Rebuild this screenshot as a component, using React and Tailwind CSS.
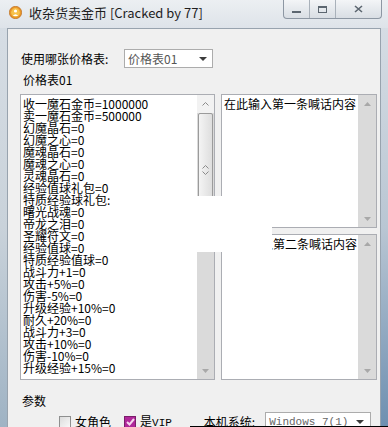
import React from 'react';

const cn = "font-['SimSun','Noto_Sans_CJK_SC',sans-serif]";

const lines = [
  '收一魔石金币=1000000',
  '卖一魔石金币=500000',
  '幻魔晶石=0',
  '幻魔之心=0',
  '魔魂晶石=0',
  '魔魂之心=0',
  '灵魂晶石=0',
  '经验值球礼包=0',
  '特质经验球礼包:',
  '曙光战魂=0',
  '帝龙之泪=0',
  '圣耀符文=0',
  '经验值球=0',
  '特质经验值球=0',
  '战斗力+1=0',
  '攻击+5%=0',
  '伤害-5%=0',
  '升级经验+10%=0',
  '耐久+20%=0',
  '战斗力+3=0',
  '攻击+10%=0',
  '伤害-10%=0',
  '升级经验+15%=0',
];

const Tri = ({ up }) => (
  <svg width="7" height="4" viewBox="0 0 7 4">
    <path d={up ? 'M0 4 L3.5 0 L7 4 Z' : 'M0 0 L3.5 4 L7 0 Z'} fill="#a8a8a8" />
  </svg>
);

const Chev = ({ up }) => (
  <svg width="7" height="4" viewBox="0 0 7 4">
    <path d={up ? 'M0.5 3.5 L3.5 0.5 L6.5 3.5' : 'M0.5 0.5 L3.5 3.5 L6.5 0.5'} fill="none" stroke="#8a8a8a" strokeWidth="1" />
  </svg>
);

// disabled win7 scrollbar (no thumb)
const EmptyScroll = () => (
  <div className="w-[18px] h-full bg-[#dadada] flex flex-col justify-between">
    <div className="h-[17px] flex items-center justify-center"><Tri up /></div>
    <div className="h-[17px] flex items-center justify-center"><Tri /></div>
  </div>
);

const ComboArrow = () => (
  <svg width="8" height="4" viewBox="0 0 8 4">
    <path d="M0 0 L8 0 L4 4 Z" fill="#3c3c3c" />
  </svg>
);

const App = () => {
  return (
    <div className={`relative w-[388px] h-[427px] overflow-hidden bg-[#d3dae2] ${cn}`}>
      {/* Title bar */}
      <div className="h-[28px] flex items-start bg-gradient-to-b from-[#eceff2] to-[#dee3e9]">
        <div className="mt-[6px] ml-[9px]">
          <svg width="13" height="13" viewBox="0 0 13 13">
            <circle cx="6.5" cy="6.5" r="6.2" fill="#e8962a" stroke="#b5651a" strokeWidth="0.6" />
            <circle cx="6.5" cy="6.5" r="4.4" fill="#f7c14a" />
            <circle cx="6.5" cy="5" r="1.6" fill="#fff" />
            <path d="M3.8 10 Q6.5 6.5 9.2 10 Z" fill="#fff" />
          </svg>
        </div>
        <div className="ml-[7px] mt-[5px] text-[13px] leading-[16px] text-[#1e1e1e] font-['Noto_Sans_CJK_SC',sans-serif]">
          收杂货卖金币 [Cracked by 77]
        </div>
        <div className="ml-auto mr-[6px] flex h-[19px] border border-t-0 border-[#8d97a3] rounded-b-[4px] bg-gradient-to-b from-[#f3f5f7] to-[#d9dee4] overflow-hidden">
          <div className="w-[26px] flex items-center justify-center border-r border-[#a9b1ba]">
            <div className="w-[9px] h-[2px] bg-[#5c6670] mt-[5px]" />
          </div>
          <div className="w-[26px] flex items-center justify-center border-r border-[#a9b1ba]">
            <div className="w-[9px] h-[7px] border border-[#5c6670] border-t-2" />
          </div>
          <div className="w-[45px] flex items-center justify-center">
            <svg width="9" height="8" viewBox="0 0 9 8">
              <path d="M1 1 L8 7 M8 1 L1 7" stroke="#5c6670" strokeWidth="1.6" />
            </svg>
          </div>
        </div>
      </div>

      <div className="flex h-[399px]">
        <div className="w-[7px] bg-gradient-to-b from-[#d6dde4] via-[#c9d2da] to-[#9fb3c4]" />
        {/* Client */}
        <div className="w-[374px] bg-[#f0f0f0] border-t border-l border-r border-[#98a3ae] pl-[12px] pt-[20px] text-[12px] leading-[12px] text-black">
          <div className="flex items-center h-[19px]">
            <div className="w-[104px] pl-[1px] text-[12px]">使用哪张价格表:</div>
            <div className="w-[89px] h-[19px] bg-white border border-[#acacac] flex items-center pl-[3px] pr-[5px]">
              <span className="text-[#555]">价格表01</span>
              <span className="ml-auto"><ComboArrow /></span>
            </div>
          </div>
          <div className="mt-[6px] ml-[3px] h-[12px]">价格表01</div>

          <div className="mt-[8px] flex gap-[6px]">
            {/* Left textarea */}
            <div className="w-[195px] h-[286px] bg-white border border-[#abadb3] flex">
              <div className="flex-1 pl-[2px] pt-[3px] overflow-hidden">
                {lines.map((l) => (
                  <div key={l} className="h-[12px] leading-[12px] whitespace-nowrap">{l}</div>
                ))}
              </div>
              <div className="w-[17px] h-full bg-[#dadada] flex flex-col">
                <div className="h-[18px] bg-[#f2f2f2] flex items-center justify-center"><Chev up /></div>
                <div className="h-[114px] mx-[1px] border border-[#9b9b9b] rounded-[2px] bg-gradient-to-r from-[#f4f4f4] to-[#dedede] flex flex-col items-center justify-center gap-[2px]">
                  <Chev up />
                  <Chev />
                </div>
                <div className="flex-1" />
                <div className="h-[17px] flex items-center justify-center"><Tri /></div>
              </div>
            </div>

            {/* Right column */}
            <div className="w-[156px] flex flex-col gap-[6px]">
              <div className="h-[134px] bg-white border border-[#abadb3] flex">
                <div className="flex-1 pl-[2px] pt-[3px] whitespace-nowrap">在此输入第一条喊话内容</div>
                <EmptyScroll />
              </div>
              <div className="h-[146px] bg-white border border-[#abadb3] flex">
                <div className="flex-1 pl-[3px] pt-[3px] whitespace-nowrap">在此输入第二条喊话内容</div>
                <EmptyScroll />
              </div>
            </div>
          </div>

          <div className="mt-[15px] ml-[2px] h-[12px]">参数</div>

          <div className="mt-[5px] flex items-center h-[19px]">
            <div className="ml-[39px] w-[12px] h-[12px] border border-[#8e8f8f] bg-gradient-to-br from-[#dcdcdc] to-[#f8f8f8]" />
            <span className="ml-[4px]">女角色</span>
            <div className="ml-[13px] w-[12px] h-[12px] border border-[#7a1d6a] bg-[#b0279a] flex items-center justify-center">
              <svg width="9" height="8" viewBox="0 0 9 8">
                <path d="M1 4 L3.5 6.5 L8 1" fill="none" stroke="#f6d6ef" strokeWidth="2" />
              </svg>
            </div>
            <span className="ml-[4px]">是<span className="font-['Liberation_Mono',monospace] text-[11px]">VIP</span></span>
            <span className="ml-[32px]">本机系统:</span>
            <div className="ml-[10px] w-[106px] h-[19px] bg-white border border-[#acacac] flex items-center pl-[3px] pr-[6px]">
              <span className="font-['Liberation_Mono',monospace] text-[11px] text-[#666]">Windows 7(1)</span>
              <span className="ml-auto"><ComboArrow /></span>
            </div>
          </div>
        </div>
        <div className="w-[7px] bg-gradient-to-b from-[#d6dde4] via-[#b9c6d3] to-[#6e8fb0]" />
      </div>

      {/* render glitch patch */}
      <div className="absolute left-[113px] top-[196px] w-[159px] h-[56px] bg-white" />
      <div className="absolute left-[190px] top-[426px] w-[198px] h-px bg-black" />
    </div>
  );
};

export default App;
